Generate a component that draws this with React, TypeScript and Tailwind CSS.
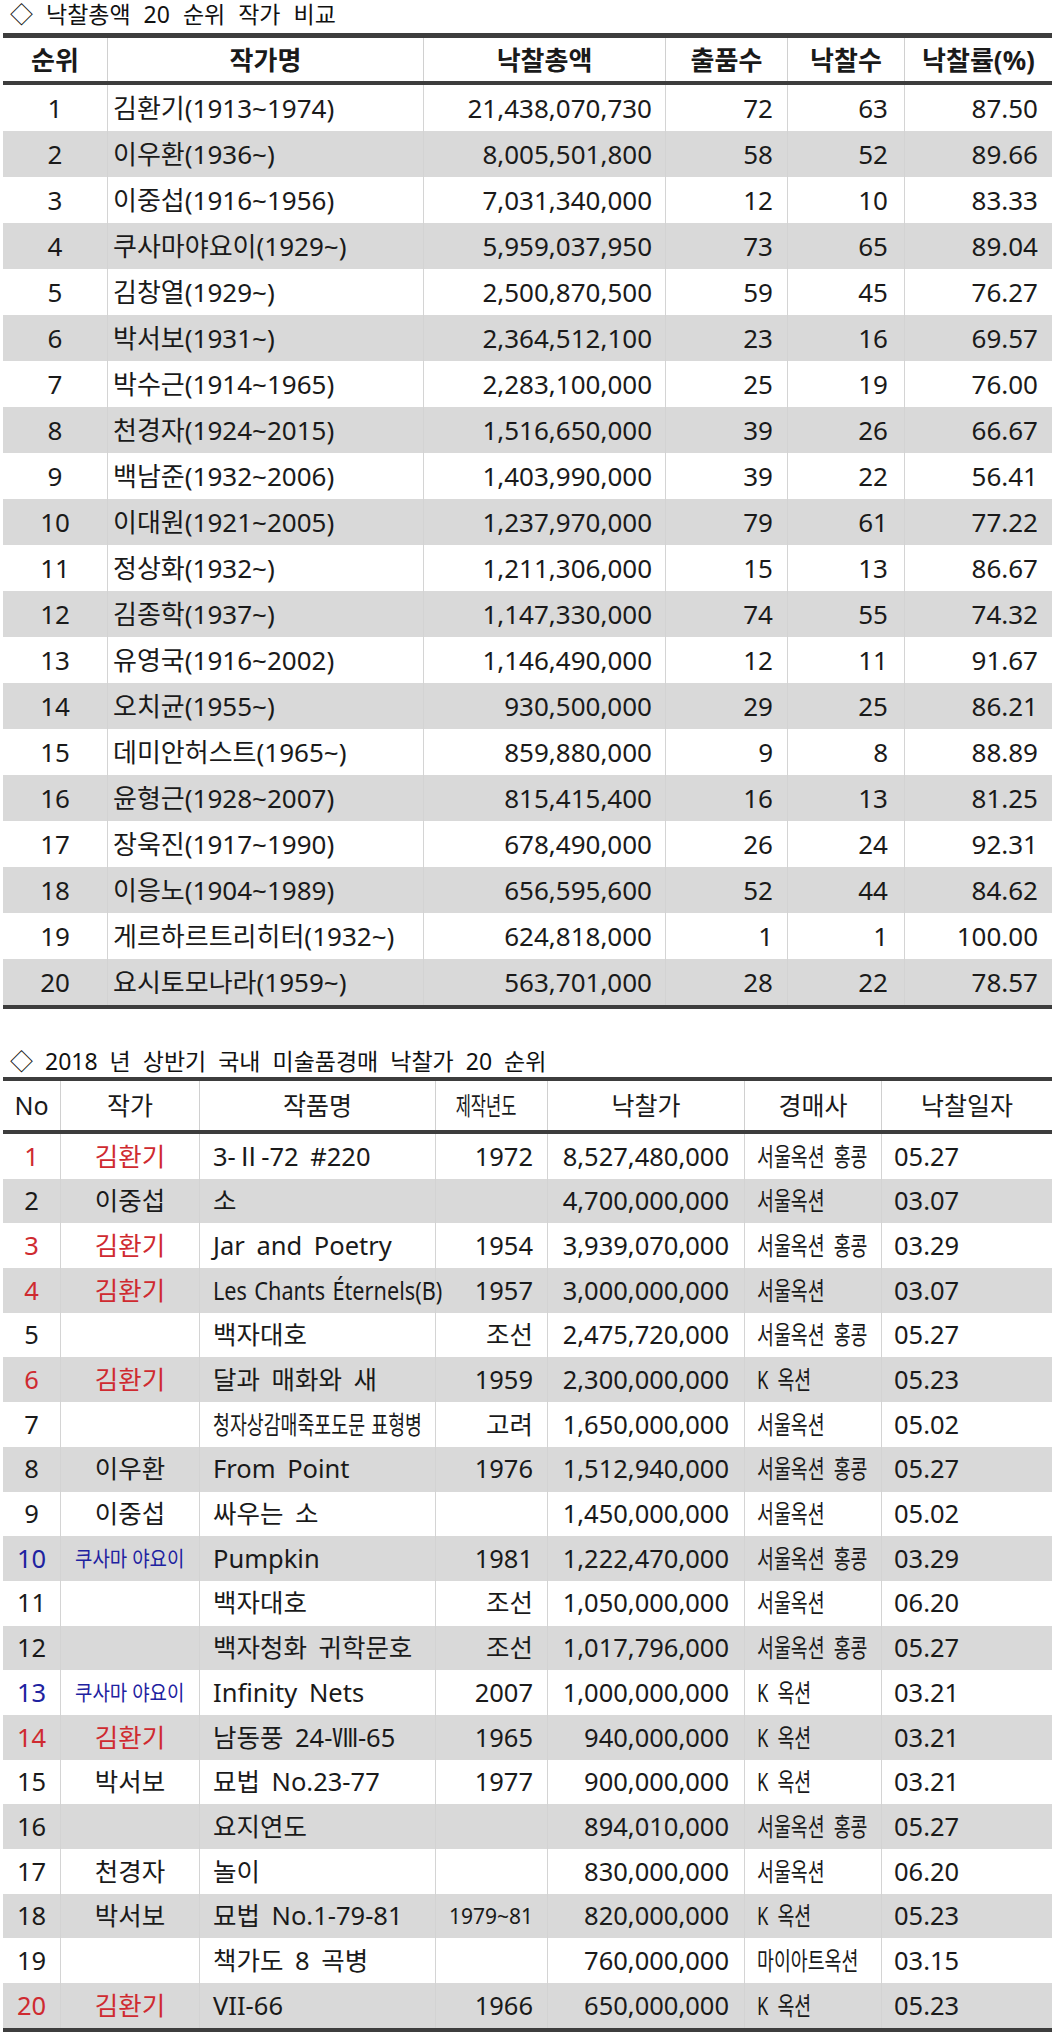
import React from "react";

type Tone = "red" | "blue" | undefined;

const rank = [
  ["1", "김환기(1913~1974)", "21,438,070,730", "72", "63", "87.50"],
  ["2", "이우환(1936~)", "8,005,501,800", "58", "52", "89.66"],
  ["3", "이중섭(1916~1956)", "7,031,340,000", "12", "10", "83.33"],
  ["4", "쿠사마야요이(1929~)", "5,959,037,950", "73", "65", "89.04"],
  ["5", "김창열(1929~)", "2,500,870,500", "59", "45", "76.27"],
  ["6", "박서보(1931~)", "2,364,512,100", "23", "16", "69.57"],
  ["7", "박수근(1914~1965)", "2,283,100,000", "25", "19", "76.00"],
  ["8", "천경자(1924~2015)", "1,516,650,000", "39", "26", "66.67"],
  ["9", "백남준(1932~2006)", "1,403,990,000", "39", "22", "56.41"],
  ["10", "이대원(1921~2005)", "1,237,970,000", "79", "61", "77.22"],
  ["11", "정상화(1932~)", "1,211,306,000", "15", "13", "86.67"],
  ["12", "김종학(1937~)", "1,147,330,000", "74", "55", "74.32"],
  ["13", "유영국(1916~2002)", "1,146,490,000", "12", "11", "91.67"],
  ["14", "오치균(1955~)", "930,500,000", "29", "25", "86.21"],
  ["15", "데미안허스트(1965~)", "859,880,000", "9", "8", "88.89"],
  ["16", "윤형근(1928~2007)", "815,415,400", "16", "13", "81.25"],
  ["17", "장욱진(1917~1990)", "678,490,000", "26", "24", "92.31"],
  ["18", "이응노(1904~1989)", "656,595,600", "52", "44", "84.62"],
  ["19", "게르하르트리히터(1932~)", "624,818,000", "1", "1", "100.00"],
  ["20", "요시토모나라(1959~)", "563,701,000", "28", "22", "78.57"],
];

type Sale = {
  no: string;
  artist: string;
  tone?: Tone;
  work: string;
  narrow?: string; // 장평 줄인 작품명
  year: string;
  smallYear?: boolean;
  price: string;
  house: string;
  date: string;
};

const sales: Sale[] = [
  { no: "1", artist: "김환기", tone: "red", work: "3-Ⅱ-72 #220", year: "1972", price: "8,527,480,000", house: "서울옥션 홍콩", date: "05.27" },
  { no: "2", artist: "이중섭", work: "소", year: "", price: "4,700,000,000", house: "서울옥션", date: "03.07" },
  { no: "3", artist: "김환기", tone: "red", work: "Jar and Poetry", year: "1954", price: "3,939,070,000", house: "서울옥션 홍콩", date: "03.29" },
  { no: "4", artist: "김환기", tone: "red", work: "Les Chants Éternels(B)", narrow: "scale-x-[0.85]", year: "1957", price: "3,000,000,000", house: "서울옥션", date: "03.07" },
  { no: "5", artist: "", work: "백자대호", year: "조선", price: "2,475,720,000", house: "서울옥션 홍콩", date: "05.27" },
  { no: "6", artist: "김환기", tone: "red", work: "달과 매화와 새", year: "1959", price: "2,300,000,000", house: "K 옥션", date: "05.23" },
  { no: "7", artist: "", work: "청자상감매죽포도문 표형병", narrow: "scale-x-[0.72]", year: "고려", price: "1,650,000,000", house: "서울옥션", date: "05.02" },
  { no: "8", artist: "이우환", work: "From Point", year: "1976", price: "1,512,940,000", house: "서울옥션 홍콩", date: "05.27" },
  { no: "9", artist: "이중섭", work: "싸우는 소", year: "", price: "1,450,000,000", house: "서울옥션", date: "05.02" },
  { no: "10", artist: "쿠사마 야요이", tone: "blue", work: "Pumpkin", year: "1981", price: "1,222,470,000", house: "서울옥션 홍콩", date: "03.29" },
  { no: "11", artist: "", work: "백자대호", year: "조선", price: "1,050,000,000", house: "서울옥션", date: "06.20" },
  { no: "12", artist: "", work: "백자청화 귀학문호", year: "조선", price: "1,017,796,000", house: "서울옥션 홍콩", date: "05.27" },
  { no: "13", artist: "쿠사마 야요이", tone: "blue", work: "Infinity Nets", year: "2007", price: "1,000,000,000", house: "K 옥션", date: "03.21" },
  { no: "14", artist: "김환기", tone: "red", work: "남동풍 24-Ⅷ-65", year: "1965", price: "940,000,000", house: "K 옥션", date: "03.21" },
  { no: "15", artist: "박서보", work: "묘법 No.23-77", year: "1977", price: "900,000,000", house: "K 옥션", date: "03.21" },
  { no: "16", artist: "", work: "요지연도", year: "", price: "894,010,000", house: "서울옥션 홍콩", date: "05.27" },
  { no: "17", artist: "천경자", work: "놀이", year: "", price: "830,000,000", house: "서울옥션", date: "06.20" },
  { no: "18", artist: "박서보", work: "묘법 No.1-79-81", year: "1979~81", smallYear: true, price: "820,000,000", house: "K 옥션", date: "05.23" },
  { no: "19", artist: "", work: "책가도 8 곡병", year: "", price: "760,000,000", house: "마이아트옥션", date: "03.15" },
  { no: "20", artist: "김환기", tone: "red", work: "VII-66", year: "1966", price: "650,000,000", house: "K 옥션", date: "05.23" },
];

const toneClass = (t: Tone) =>
  t === "red" ? "text-[#cf2a30]" : t === "blue" ? "text-[#1e22a0]" : "text-[#1a1a1a]";

const Rule = () => <div className="h-[4px] bg-[#3d3d3d]" />;

const t1Grid = "grid grid-cols-[104px_316px_242px_122px_117px_1fr]";
const t2Grid = "grid grid-cols-[57px_139px_236px_112px_197px_137px_1fr]";

// 셀 공통
const cell = "flex items-center whitespace-nowrap leading-none";

const App = () => {
  return (
    <div className="w-[1052px] h-[2044px] bg-white pl-[3px] text-[#1a1a1a] [font-family:'Noto_Sans','Noto_Sans_CJK_KR',sans-serif]">
      {/* 낙찰총액 20순위 */}
      <div className="h-[33px] flex items-center pb-[5px] pl-[7px] text-[23px] leading-none text-[#111] [word-spacing:7px]">
        ◇ 낙찰총액 20 순위 작가 비교
      </div>
      <div className="h-[5px] bg-[#3d3d3d]" />
      <div className={`${t1Grid} h-[43px] text-[26px] font-bold`}>
        {["순위", "작가명", "낙찰총액", "출품수", "낙찰수", "낙찰률(%)"].map((h, i) => (
          <div key={h} className={`${cell} justify-center ${i > 0 ? "border-l border-[#d0d0d0]" : ""}`}>
            {h}
          </div>
        ))}
      </div>
      <Rule />
      {rank.map((r, idx) => {
        const gray = idx % 2 === 1;
        const line = gray ? "border-l border-[#d3d3d3]" : "border-l border-[#d4d4d4]";
        return (
          <div key={r[0]} className={`${t1Grid} h-[46px] text-[26px] ${gray ? "bg-[#d9d9d9]" : "bg-white"}`}>
            <div className={`${cell} justify-center`}>{r[0]}</div>
            <div className={`${cell} pl-[5px] ${line}`}>{r[1]}</div>
            <div className={`${cell} justify-end pr-[13px] ${line}`}>{r[2]}</div>
            <div className={`${cell} justify-end pr-[14px] ${line}`}>{r[3]}</div>
            <div className={`${cell} justify-end pr-[16px] ${line}`}>{r[4]}</div>
            <div className={`${cell} justify-end pr-[14px] ${line}`}>{r[5]}</div>
          </div>
        );
      })}
      <Rule />

      {/* 2018 상반기 낙찰가 20순위 */}
      <div className="h-[68px] flex items-center pt-[36px] pl-[7px] text-[23px] leading-none text-[#111] [word-spacing:6px]">
        ◇ 2018 년 상반기 국내 미술품경매 낙찰가 20 순위
      </div>
      <Rule />
      <div className={`${t2Grid} h-[49px] text-[25px]`}>
        <div className={`${cell} justify-center`}>No</div>
        <div className={`${cell} justify-center border-l border-[#d0d0d0]`}>작가</div>
        <div className={`${cell} justify-center border-l border-[#d0d0d0]`}>작품명</div>
        <div className={`${cell} justify-center pr-[10px] border-l border-[#d0d0d0]`}>
          <span className="inline-block scale-x-[0.66]">제작년도</span>
        </div>
        <div className={`${cell} justify-center border-l border-[#d0d0d0]`}>낙찰가</div>
        <div className={`${cell} justify-center border-l border-[#d0d0d0]`}>경매사</div>
        <div className={`${cell} justify-center border-l border-[#d0d0d0]`}>낙찰일자</div>
      </div>
      <Rule />
      {sales.map((s, idx) => {
        const gray = idx % 2 === 1;
        const line = gray ? "border-l border-[#d3d3d3]" : "border-l border-[#d4d4d4]";
        return (
          <div key={s.no} className={`${t2Grid} h-[44.7px] text-[25.5px] ${gray ? "bg-[#d9d9d9]" : "bg-white"}`}>
            <div className={`${cell} justify-center ${toneClass(s.tone)}`}>{s.no}</div>
            <div className={`${cell} justify-center ${line} ${toneClass(s.tone)}`}>
              {s.tone === "blue" ? (
                <span className="inline-block text-[21px] scale-x-[0.9]">{s.artist}</span>
              ) : (
                s.artist
              )}
            </div>
            <div className={`${cell} pl-[13px] ${line} [word-spacing:5px]`}>
              {s.narrow ? (
                <span className={`inline-block origin-left ${s.narrow} [word-spacing:2px]`}>{s.work}</span>
              ) : (
                s.work
              )}
            </div>
            <div className={`${cell} justify-end pr-[14px] ${line}`}>
              {s.smallYear ? <span className="text-[21px]">{s.year}</span> : s.year}
            </div>
            <div className={`${cell} justify-end pr-[15px] ${line}`}>{s.price}</div>
            <div className={`${cell} pl-[12px] ${line}`}>
              <span className="inline-block origin-left scale-x-[0.72] [word-spacing:6px]">{s.house}</span>
            </div>
            <div className={`${cell} pl-[12px] ${line}`}>{s.date}</div>
          </div>
        );
      })}
      <Rule />
    </div>
  );
};

export default App;
